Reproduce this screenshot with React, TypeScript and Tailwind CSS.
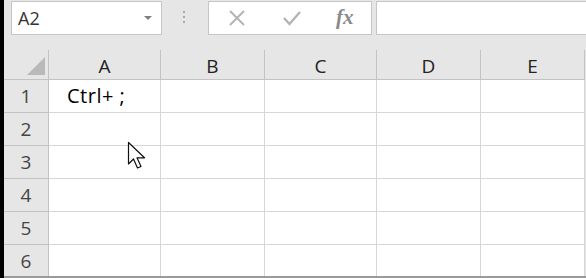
const cols = [
  { label: 'A', w: 'w-[112px]' },
  { label: 'B', w: 'w-[104px]' },
  { label: 'C', w: 'w-[112px]' },
  { label: 'D', w: 'w-[104px]' },
  { label: 'E', w: 'w-[104px]' },
]

const rows = [1, 2, 3, 4, 5, 6]

const font = { fontFamily: '"Open Sans", "Noto Sans", "Noto Sans CJK SC", sans-serif' }

function Cursor() {
  return (
    <svg className="absolute left-[123px] top-[141px]" width="22" height="30" viewBox="0 0 22 30">
      <path
        d="M1.5 1.5 L1.5 23 L6.5 18 L10.5 27 L14 25.5 L10 16.8 L17.5 16.8 Z"
        fill="white"
        stroke="#111"
        strokeWidth="1.2"
        strokeLinejoin="round"
      />
    </svg>
  )
}

export default function App() {
  return (
    <div className="flex h-[278px] w-[586px] overflow-hidden bg-[#e6e6e6]" style={font}>
      {/* left edge */}
      <div className="w-[4px] shrink-0 bg-black" />

      <div className="relative flex flex-1 flex-col">
        {/* formula bar */}
        <div className="flex h-[50px] items-start pt-[1px]">
          <div className="ml-[7px] flex h-[34px] w-[151px] items-center border border-[#c6c6c6] bg-white pl-[6px] pr-[9px]">
            <span className="flex-1 text-[18px] text-[#333]">A2</span>
            <span className="h-0 w-0 border-x-[4px] border-t-[4px] border-x-transparent border-t-[#808080]" />
          </div>
          <div className="ml-[21px] mt-[10px] flex flex-col gap-[3px]">
            <span className="h-[2px] w-[2px] bg-[#a8a8a8]" />
            <span className="h-[2px] w-[2px] bg-[#a8a8a8]" />
            <span className="h-[2px] w-[2px] bg-[#a8a8a8]" />
          </div>
          <div className="ml-[23px] flex h-[34px] w-[164px] items-center border border-[#c6c6c6] bg-white">
            <svg className="ml-[19px]" width="18" height="18" viewBox="0 0 18 18">
              <path d="M2 2 L16 16 M16 2 L2 16" stroke="#b4b4b4" strokeWidth="2" />
            </svg>
            <svg className="ml-[36px]" width="20" height="18" viewBox="0 0 20 18">
              <path d="M2 9 L7.5 15 L18 3" stroke="#b4b4b4" strokeWidth="2.4" fill="none" />
            </svg>
            <span
              className="ml-[34px] text-[21px] font-bold italic text-[#8a8a8a]"
              style={{ fontFamily: '"Liberation Serif", serif' }}
            >
              fx
            </span>
          </div>
          <div className="ml-[4px] h-[34px] flex-1 border border-r-0 border-[#c6c6c6] bg-white" />
        </div>

        {/* grid */}
        <div className="flex flex-col">
          <div className="flex h-[30px]">
            <div className="relative w-[45px] shrink-0 border-b border-r border-[#c3c3c3]">
              <svg className="absolute bottom-[4px] right-[3px]" width="18" height="18" viewBox="0 0 18 18">
                <path d="M18 0 L18 18 L0 18 Z" fill="#b9b9b9" />
              </svg>
            </div>
            {cols.map((c) => (
              <div
                key={c.label}
                className={`${c.w} flex shrink-0 items-center justify-center border-b border-r border-[#c3c3c3] pt-[3px] text-[19px] text-[#222]`}
              >
                {c.label}
              </div>
            ))}
          </div>
          {rows.map((r) => (
            <div key={r} className="flex h-[33px]">
              <div className="flex w-[45px] shrink-0 items-center justify-center border-b border-r border-[#c3c3c3] text-[19px] text-[#444]">
                {r}
              </div>
              {cols.map((c, i) => (
                <div
                  key={c.label}
                  className={`${c.w} flex shrink-0 items-center border-b border-r border-[#d6d6d6] bg-white`}
                >
                  {r === 1 && i === 0 && (
                    <span className="pl-[18px] text-[20px] tracking-[0.5px] text-black">
                      Ctrl+ ;
                    </span>
                  )}
                </div>
              ))}
            </div>
          ))}
        </div>

        <div className="absolute bottom-0 left-0 right-0 h-[2px] bg-[#9a9a9a]" />
        <Cursor />
      </div>
    </div>
  )
}
